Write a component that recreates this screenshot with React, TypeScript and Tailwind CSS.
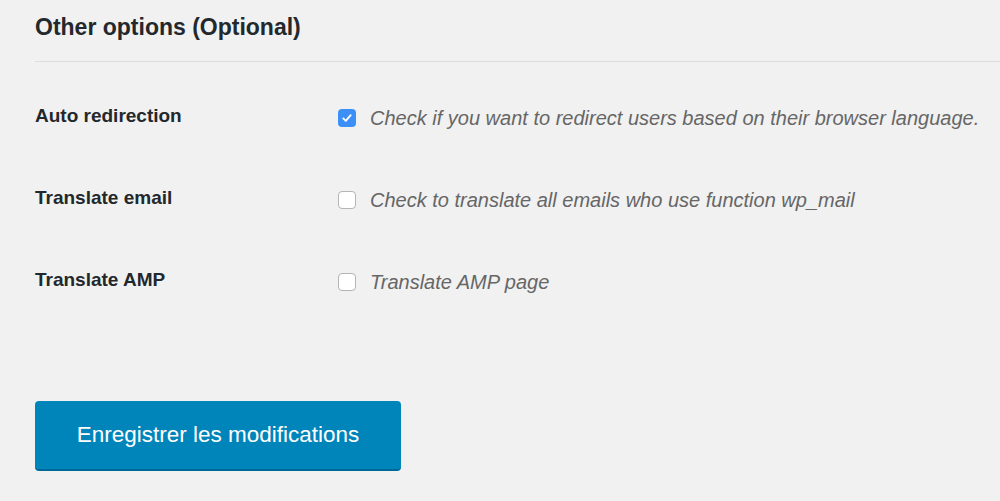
import React from "react";

const rows = [
  { label: "Auto redirection", desc: "Check if you want to redirect users based on their browser language.", checked: true },
  { label: "Translate email", desc: "Check to translate all emails who use function wp_mail", checked: false },
  { label: "Translate AMP", desc: "Translate AMP page", checked: false },
];

function Box({ checked }: { checked: boolean }) {
  if (checked) {
    return (
      <span className="flex h-[18px] w-[18px] shrink-0 items-center justify-center rounded-[4px] bg-[#3b8ff6]">
        <svg viewBox="0 0 12 12" className="h-[12px] w-[12px]">
          <path d="M2.3 6.4 L4.8 8.9 L9.7 3.2" fill="none" stroke="#fff" strokeWidth="1.9" strokeLinecap="round" strokeLinejoin="round" />
        </svg>
      </span>
    );
  }
  return <span className="h-[18px] w-[18px] shrink-0 rounded-[4px] border border-[#b4b4b4] bg-white" />;
}

export default function App() {
  return (
    <div className="min-h-[501px] w-[1000px] bg-[#f1f1f1] pl-[35px] font-['Liberation_Sans',Arial,sans-serif] text-[#23282d]">
      <div className="flex h-[62px] items-center border-b border-[#dddddd] pb-[6px]">
        <h2 className="text-[23px] font-bold">Other options (Optional)</h2>
      </div>
      <div className="pt-[30px]">
        {rows.map((r) => (
          <div key={r.label} className="flex h-[82px] items-start">
            <div className="w-[303px] pt-[12px] text-[19px] font-bold leading-[24px]">{r.label}</div>
            <div className="flex items-center gap-[14px] pt-[14px]">
              <Box checked={r.checked} />
              <span className="text-[20px] italic leading-[24px] text-[#666666]">{r.desc}</span>
            </div>
          </div>
        ))}
      </div>
      <div className="pt-[63px]">
        <button className="h-[70px] w-[366px] rounded-[4px] border-b-[2px] border-[#006799] bg-[#0085ba] text-[22.5px] text-white">
          Enregistrer les modifications
        </button>
      </div>
    </div>
  );
}
